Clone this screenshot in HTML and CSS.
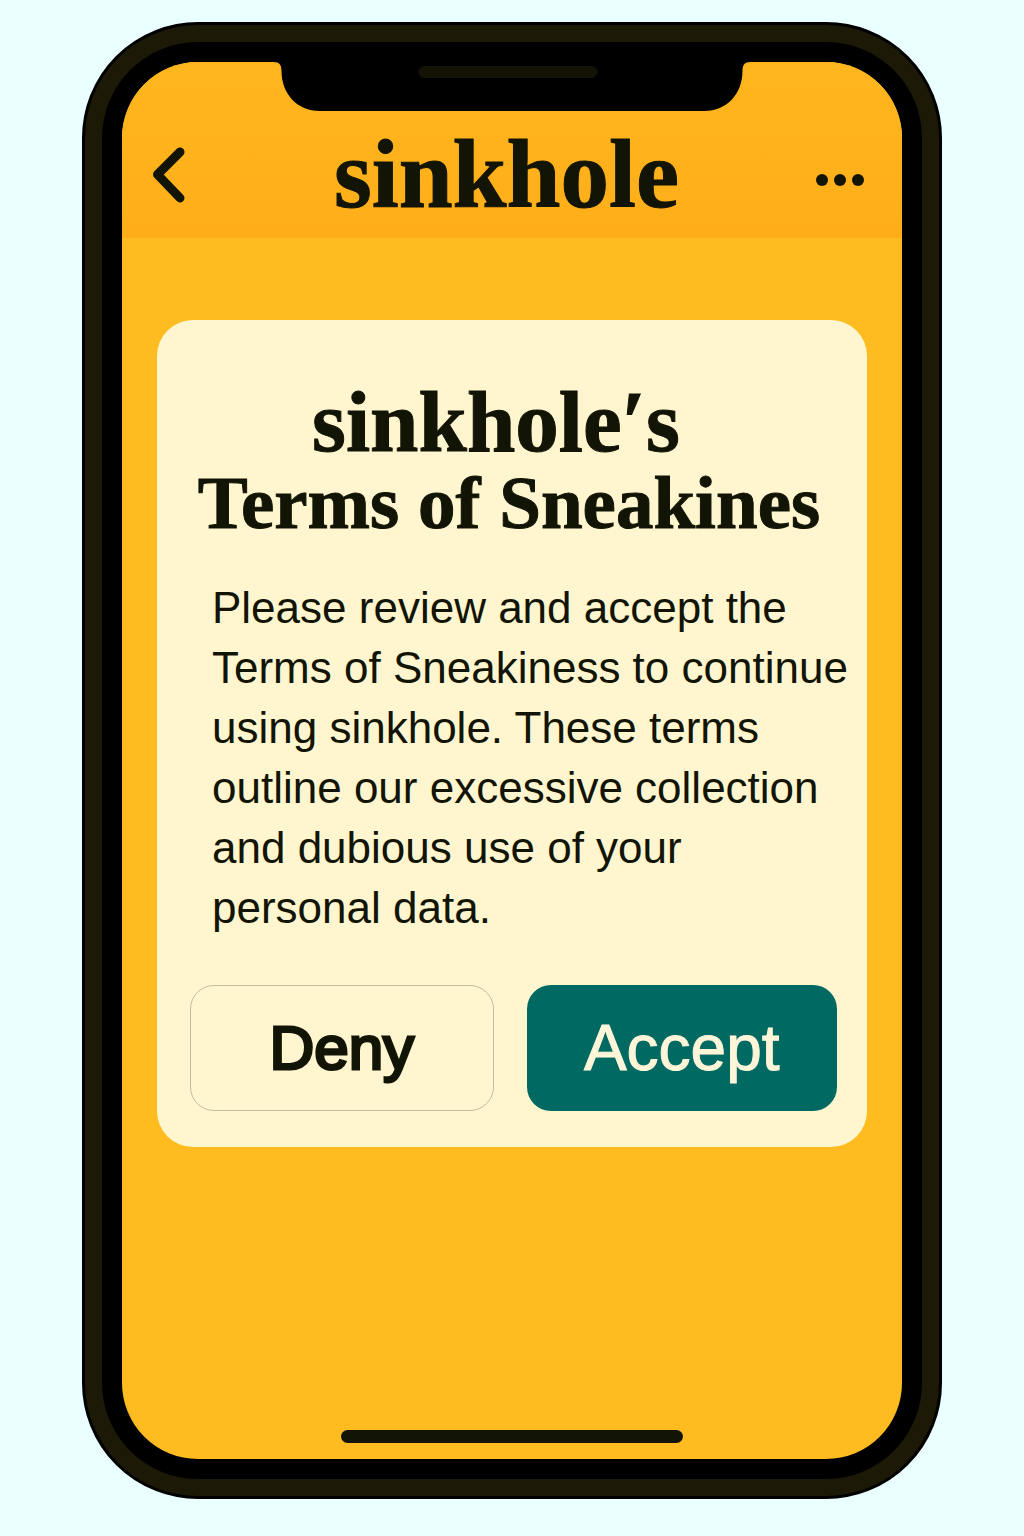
FILE: index.html
```html
<!DOCTYPE html>
<html lang="en">
<head>
  <meta charset="utf-8">
  <meta name="viewport" content="width=device-width, initial-scale=1">
  <title>sinkhole</title>
  <link rel="stylesheet" href="styles.css">
</head>
<body>
  <div class="phone">
    <div class="bezel">
      <div class="screen">
        <svg class="notch" viewBox="0 0 477 49" aria-hidden="true">
          <path d="M0 0C6 0 8 3 8 9C8 32 24 49 46 49H431C453 49 469 32 469 9C469 3 471 0 477 0Z" fill="#000"/>
          <rect x="145" y="4" width="179" height="12" rx="6" fill="#141204"/>
        </svg>
        <header class="topbar">
          <button class="icon-button" type="button" aria-label="Back">
            <svg width="44" height="56" viewBox="0 0 44 56" aria-hidden="true">
              <path d="M27 5L4.500 27.500L27 51" fill="none" stroke="currentColor" stroke-width="9" stroke-linecap="round" stroke-linejoin="round"/>
            </svg>
          </button>
          <h1 class="brand">sinkhole</h1>
          <button class="icon-button" type="button" aria-label="More options">
            <svg width="48" height="56" viewBox="0 0 48 56" aria-hidden="true">
              <g fill="currentColor">
                <circle cx="6" cy="33" r="6"/>
                <circle cx="24" cy="33" r="6"/>
                <circle cx="42" cy="33" r="6"/>
              </g>
            </svg>
          </button>
        </header>
        <main class="content">
          <section class="card" aria-labelledby="terms-title">
            <h2 class="title" id="terms-title">
              <span class="title-brand">sinkhole′s</span>
              <span class="title-terms">Terms of Sneakines</span>
            </h2>
            <p class="message">Please review and accept the<br>
              Terms of Sneakiness to continue<br>
              using sinkhole. These terms<br>
              outline our excessive collection<br>
              and dubious use of your<br>
              personal data.</p>
            <div class="actions">
              <button class="button button-deny" type="button">Deny</button>
              <button class="button button-accept" type="button">Accept</button>
            </div>
          </section>
        </main>
        <div class="home-indicator"></div>
      </div>
    </div>
  </div>
</body>
</html>
```

FILE: styles.css
```css
* {
  box-sizing: border-box;
}

body {
  margin: 0;
  min-height: 100vh;
  padding: 22px 82px 37px;
  display: flex;
  flex-direction: column;
  background: #eaffff;
  color: #121405;
  font-family: "Liberation Sans", Arial, sans-serif;
}

.phone,
.bezel,
.screen {
  flex: 1;
  display: flex;
  flex-direction: column;
}

.phone {
  padding: 17px;
  border: 3px solid #000;
  border-radius: 116px;
  background: #1c1906;
}

.bezel {
  padding: 20px;
  border-radius: 96px;
  background: #000;
}

.screen {
  position: relative;
  overflow: hidden;
  border-radius: 76px;
  background: #febc20;
}

.notch {
  position: absolute;
  top: 0;
  left: 50%;
  width: 477px;
  height: 49px;
  transform: translateX(-50%);
}

.topbar {
  display: flex;
  align-items: center;
  justify-content: space-between;
  padding: 65px 38px 15px 31px;
  background: linear-gradient(#ffb61e, #ffae19);
}

.icon-button {
  display: flex;
  padding: 0;
  border: 0;
  background: none;
  color: inherit;
  cursor: pointer;
}

.brand {
  margin: 0;
  font-family: "Liberation Serif", "Times New Roman", serif;
  font-size: 97px;
  line-height: 96px;
  -webkit-text-stroke: 1px currentColor;
}

.content {
  flex: 1;
  padding: 82px 35px;
}

.card {
  padding: 58px 0 36px;
  border-radius: 36px;
  background: #fff6d0;
}

.title {
  margin: 0;
  font-family: "Liberation Serif", "Times New Roman", serif;
  text-align: center;
  white-space: nowrap;
  -webkit-text-stroke: 1px currentColor;
}

.title span {
  display: block;
}

.title-brand {
  padding-right: 32px;
  font-size: 87px;
  line-height: 88px;
}

.title-terms {
  padding-right: 6px;
  font-size: 75px;
  line-height: 74px;
}

.message {
  margin: 38px 0 47px;
  padding-left: 55px;
  font-size: 44px;
  line-height: 60px;
  white-space: nowrap;
}

.actions {
  display: grid;
  grid-template-columns: 304fr 311fr;
  gap: 33px;
  padding: 0 30px 0 33px;
}

.button {
  height: 126px;
  padding: 0;
  border: 1px solid transparent;
  border-radius: 24px;
  font-family: "Liberation Sans", Arial, sans-serif;
  font-size: 64px;
  line-height: 72px;
  cursor: pointer;
}

.button-deny {
  border-color: #c4bd9d;
  background: none;
  color: inherit;
  font-size: 62px;
  -webkit-text-stroke: 3px currentColor;
}

.button-accept {
  background: #006a62;
  color: #fff5d8;
  -webkit-text-stroke: 1px currentColor;
}

.home-indicator {
  width: 342px;
  height: 13px;
  margin: 0 auto 16px;
  border-radius: 8px;
  background: #121405;
}
```
